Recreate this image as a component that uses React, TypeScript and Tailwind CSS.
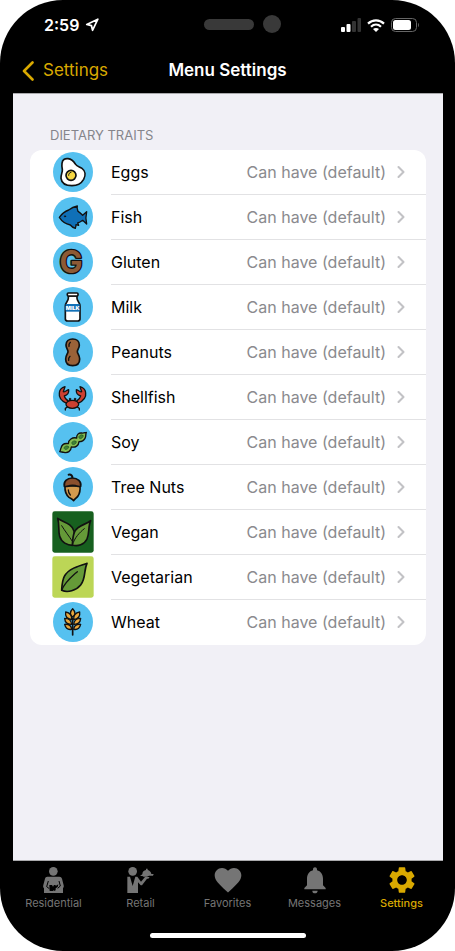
import type { ReactNode } from "react";
import { clsx } from "clsx";
import { ChevronRight, Navigation } from "lucide-react";
import { MdFavorite, MdNotifications, MdSettings } from "react-icons/md";

const INK = "#111111";

function Badge({ square, children }: { square?: string; children: ReactNode }) {
  return (
    <svg
      viewBox="0 0 126 126"
      className="mt-px size-[42px] shrink-0 self-start"
      fill="none"
      stroke={INK}
      strokeWidth="5"
      strokeLinecap="round"
      strokeLinejoin="round"
      aria-hidden="true"
    >
      {square ? (
        <rect x="1" y="1" width="124" height="124" rx="7" fill={square} stroke="none" />
      ) : (
        <circle cx="63" cy="63" r="60" fill="#56c1f0" stroke="none" />
      )}
      {children}
    </svg>
  );
}

function EggIcon() {
  return (
    <Badge>
      <path fill="#fff" d="M30 37C31 26 38 22 48 23C60 24 66 32 70 39C74 47 83 47 90 52C101 60 101 74 95 85C88 97 75 104 60 104C42 104 29 97 27 82C26 72 32 64 31 55C30 48 29 44 30 37Z" />
      <circle cx="57" cy="73" r="15" fill="#f6d743" />
      <path strokeWidth="3" d="M50 73C50 68 52 65 57 64" />
    </Badge>
  );
}

function FishIcon() {
  return (
    <Badge>
      <path fill="#0f70b7" strokeWidth="4" d="M22 64C29 54 39 46 50 42C58 36 67 32 76 30C74 36 76 40 78 46C84 49 88 54 92 58L104 47C101 60 101 73 104 84L92 73C87 77 82 80 77 81L80 88L72 86C72 90 71 93 70 97C64 95 58 91 55 87C41 84 29 75 22 64Z" />
      <circle cx="39" cy="61" r="2" fill={INK} strokeWidth="2" />
    </Badge>
  );
}

function GlutenIcon() {
  return (
    <Badge>
      <text
        x="57"
        y="97"
        textAnchor="middle"
        fontFamily="Inter, sans-serif"
        fontSize="92"
        fontWeight="700"
        fill="#8d5a35"
        strokeWidth="8"
        paintOrder="stroke"
      >
        G
      </text>
    </Badge>
  );
}

function MilkIcon() {
  return (
    <Badge>
      <path fill="#fff" d="M49 30V37C49 46 40 49 40 60V99C40 103 43 105 47 105H77C81 105 84 103 84 99V60C84 49 75 46 75 37V30Z" />
      <rect x="46" y="21" width="32" height="9" rx="3" fill="#fff" />
      <rect x="41" y="54" width="42" height="23" fill="#1271b8" stroke="none" />
      <text
        x="62"
        y="71"
        textAnchor="middle"
        fontFamily="Inter, sans-serif"
        fontSize="16"
        fontWeight="900"
        fill="#fff"
        stroke="none"
      >
        MILK
      </text>
    </Badge>
  );
}

function PeanutIcon() {
  return (
    <Badge>
      <path fill="#9a6238" d="M62 24C74 24 82 31 82 42C82 52 76 56 76 62C76 68 83 73 83 84C83 97 75 104 62 104C49 104 41 97 41 84C41 73 48 68 48 62C48 56 42 52 42 42C42 31 50 24 62 24Z" />
      <path strokeWidth="4" d="M51 46C50 41 52 37 55 34M50 88C49 82 51 79 54 76" />
    </Badge>
  );
}

function CrabIcon() {
  return (
    <Badge>
      <path d="M46 93L40 97V102M76 93L82 97V102M54 76V70M69 76V70" strokeWidth="4" />
      <g fill="#cc4031" strokeWidth="4">
        <path d="M44 82C30 76 20 64 22 50C23 41 28 35 39 32L34 47C36 50 42 44 50 41C51 51 45 58 37 60C38 66 44 72 50 76Z" />
        <path d="M78 82C92 76 103 64 101 50C100 41 95 35 84 32L89 47C87 50 81 44 73 41C72 51 78 58 86 60C85 66 79 72 73 76Z" />
        <ellipse cx="61" cy="85" rx="19" ry="12" />
      </g>
      <circle cx="54" cy="69" r="3" fill={INK} strokeWidth="1" />
      <circle cx="69" cy="69" r="3" fill={INK} strokeWidth="1" />
    </Badge>
  );
}

function SoyIcon() {
  return (
    <Badge>
      <path fill="#84bd52" strokeWidth="4" d="M23 92C26 89 25 85 27 81C30 70 39 66 49 68C49 56 61 48 74 51C73 41 80 35 89 36C95 37 98 35 103 34C100 40 103 46 99 52C95 60 88 62 81 62C80 74 71 80 58 78C57 91 47 97 36 94C31 93 28 93 23 92Z" />
      <g fill="#3f8435" stroke="#2c5e28" strokeWidth="2">
        <ellipse cx="43" cy="80" rx="7" ry="5" transform="rotate(-20 43 80)" />
        <ellipse cx="66" cy="65" rx="7" ry="5" transform="rotate(-25 66 65)" />
        <ellipse cx="87" cy="47" rx="7" ry="5" transform="rotate(-35 87 47)" />
      </g>
    </Badge>
  );
}

function AcornIcon() {
  return (
    <Badge>
      <path d="M61 37C62 30 58 25 50 26" strokeWidth="6" />
      <path fill="#d39a4e" d="M39 60C38 75 42 86 51 94C56 98 61 99 65 104C68 99 74 96 78 90C84 81 85 71 84 60Z" />
      <path fill="#8a4f2d" d="M37 61C34 47 45 36 61 36C77 36 89 47 86 61C79 63 75 60 70 59C64 58 60 58 54 59C48 60 44 63 37 61Z" />
      <path strokeWidth="4" d="M49 72C49 79 52 84 55 87" />
    </Badge>
  );
}

function VeganIcon() {
  return (
    <Badge square="#17601f">
      <path fill="#659a38" d="M17 22C34 34 58 36 66 60C70 74 68 91 62 103C46 103 28 94 23 76C18 58 23 42 17 22Z" />
      <path fill="#659a38" d="M116 29C104 41 76 41 67 64C62 77 62 90 61 102C77 107 97 101 105 84C113 66 108 46 116 29Z" />
      <path strokeWidth="3" d="M29 44C40 62 51 75 61 91M97 53C82 65 68 80 61 102" />
    </Badge>
  );
}

function VegetarianIcon() {
  return (
    <Badge square="#bcd656">
      <path fill="#659a38" d="M105 22C82 29 49 38 37 61C30 75 30 88 29 103C47 111 72 104 86 87C102 68 95 43 105 22Z" />
      <path strokeWidth="4" d="M29 103C38 79 57 64 76 47" />
    </Badge>
  );
}

function WheatIcon() {
  return (
    <Badge>
      <path d="M62 52V102" />
      <g fill="#eaa83e" strokeWidth="4">
        <path d="M62 23C53 32 53 42 62 48C71 42 71 32 62 23Z" />
        <path d="M41 33C39 46 46 54 59 56C60 44 53 35 41 33Z" />
        <path d="M83 33C85 46 78 54 65 56C64 44 71 35 83 33Z" />
        <path d="M38 52C39 65 47 71 59 70C58 59 50 52 38 52Z" />
        <path d="M86 52C85 65 77 71 65 70C66 59 74 52 86 52Z" />
        <path d="M38 70C41 82 49 87 59 85C58 75 50 69 38 70Z" />
        <path d="M86 70C83 82 75 87 65 85C66 75 74 69 86 70Z" />
      </g>
    </Badge>
  );
}

function ResidentialIcon() {
  return (
    <svg viewBox="-6 -6 96 96" className="size-8" fill="currentColor" aria-hidden="true">
      <circle cx="40" cy="16" r="13" />
      <path d="M22 32H58C62 32 65 34 66 38L71 58C72 62 71 64 69 67V81H12V67C9 64 9 61 10 57L15 38C16 34 18 32 22 32Z" />
      <path fill="none" stroke="#000" strokeWidth="3" d="M25 45L20 62L28 68M57 45L61 60L53 67" />
      <path fill="#000" d="M28 57H37V61H41V57H47V60L55 55L53 63L47 67V73L42 75L39 72V75H29Z" />
    </svg>
  );
}

function RetailIcon() {
  return (
    <svg viewBox="-6 -6 96 96" className="size-8" fill="currentColor" aria-hidden="true">
      <circle cx="17" cy="16" r="13" />
      <path d="M1 32H9L17 60L25 32H31L42 47L54 33H68L64 38H60L45 58H41L33 49V81H1Z" />
      <path d="M39 30L46 25C46 17 51 13 57 12V8H62V12C68 14 72 18 73 24H80L78 29H66L60 32H50L46 30Z" />
    </svg>
  );
}

function SignalIcon() {
  return (
    <svg viewBox="0 0 20 14" className="h-[14px] w-5" fill="#fff" aria-hidden="true">
      <rect x="0" y="9" width="4" height="5" rx="1" />
      <rect x="5.500" y="6" width="4" height="8" rx="1" />
      <rect x="11" y="3" width="4" height="11" rx="1" fill="#333" />
      <rect x="16.500" y="0" width="3.500" height="14" rx="1" fill="#333" />
    </svg>
  );
}

function WifiIcon() {
  return (
    <svg viewBox="0 0 18 13" className="h-[13px] w-[18px]" fill="none" stroke="#fff" strokeWidth="2.200" aria-hidden="true">
      <path d="M1 4.600C5.500 0.200 12.500 0.200 17 4.600" />
      <path d="M4 7.800C7 5 11 5 14 7.800" />
      <path d="M9 13L6 10C7.700 8.500 10.300 8.500 12 10Z" fill="#fff" stroke="none" />
    </svg>
  );
}

function BatteryIcon() {
  return (
    <svg viewBox="0 0 28 14" className="h-[14px] w-7" fill="none" aria-hidden="true">
      <rect x="0.500" y="0.500" width="25" height="13" rx="4" stroke="#666" />
      <rect x="2" y="2" width="18" height="10" rx="2.500" fill="#fff" />
      <path d="M27 5V9C28.200 8.500 28.200 5.500 27 5Z" fill="#666" />
    </svg>
  );
}

function BackIcon() {
  return (
    <svg
      viewBox="0 0 12 20"
      className="h-5 w-3"
      fill="none"
      stroke="currentColor"
      strokeWidth="2.600"
      strokeLinecap="round"
      strokeLinejoin="round"
      aria-hidden="true"
    >
      <path d="M10.500 1.500L2 10L10.500 18.500" />
    </svg>
  );
}

const traits = [
  { name: "Eggs", icon: EggIcon },
  { name: "Fish", icon: FishIcon },
  { name: "Gluten", icon: GlutenIcon },
  { name: "Milk", icon: MilkIcon },
  { name: "Peanuts", icon: PeanutIcon },
  { name: "Shellfish", icon: CrabIcon },
  { name: "Soy", icon: SoyIcon },
  { name: "Tree Nuts", icon: AcornIcon },
  { name: "Vegan", icon: VeganIcon },
  { name: "Vegetarian", icon: VegetarianIcon },
  { name: "Wheat", icon: WheatIcon },
];

const tabs = [
  { label: "Residential", icon: ResidentialIcon },
  { label: "Retail", icon: RetailIcon },
  { label: "Favorites", icon: MdFavorite },
  { label: "Messages", icon: MdNotifications },
  { label: "Settings", icon: MdSettings },
];

function StatusBar() {
  return (
    <div className="grid h-12 grid-cols-[1fr_auto_1fr] items-center pr-9 pl-11 text-white">
      <div className="flex items-center gap-[6px] pt-[2px]">
        <span className="text-base font-semibold">2:59</span>
        <Navigation className="size-[14px]" strokeWidth={3} />
      </div>
      <div className="flex items-center gap-[9px] pl-[22px]">
        <span className="h-[11px] w-[50px] rounded-full bg-[#393939]" />
        <span className="size-[18px] rounded-full bg-[#393939]" />
      </div>
      <div className="flex items-center justify-end gap-[6px] pt-[2px]">
        <SignalIcon />
        <WifiIcon />
        <BatteryIcon />
      </div>
    </div>
  );
}

function NavBar() {
  return (
    <header className="grid h-[45px] grid-cols-[1fr_auto_1fr] items-center px-[22px] pt-px">
      <button className="flex items-center gap-[9px] text-[17px] text-[#d9a900]">
        <BackIcon />
        Settings
      </button>
      <h1 className="text-[17px] font-semibold text-white">Menu Settings</h1>
    </header>
  );
}

function TraitList() {
  return (
    <section>
      <h2 className="pl-5 text-[13px] leading-5 text-[#85858b]">DIETARY TRAITS</h2>
      <ul className="mt-[5px] overflow-hidden rounded-xl bg-white">
        {traits.map((trait, i) => (
          <li key={trait.name}>
            <button className="flex h-[45px] w-full items-center gap-[17px] pl-[22px] text-left text-base">
              <trait.icon />
              <span
                className={clsx(
                  "flex h-full flex-1 items-center border-b pr-[15px]",
                  i < traits.length - 1 ? "border-[#e2e2e4]" : "border-transparent"
                )}
              >
                <span className="flex-1 text-black">{trait.name}</span>
                <span className="text-[#8a8a8e]">Can have (default)</span>
                <ChevronRight className="ml-[5px] size-5 text-[#c2c2c5]" strokeWidth={2.5} />
              </span>
            </button>
          </li>
        ))}
      </ul>
    </section>
  );
}

function TabBar({ active }: { active: string }) {
  return (
    <nav className="grid grid-cols-5 px-[10px] pt-[3px]">
      {tabs.map((tab) => (
        <button
          key={tab.label}
          className={clsx(
            "flex flex-col items-center text-[11px] leading-[14px]",
            tab.label === active ? "font-medium text-[#d9a900]" : "text-[#757575]"
          )}
        >
          <tab.icon className="size-8" />
          {tab.label}
        </button>
      ))}
    </nav>
  );
}

export default function App() {
  return (
    <div className="min-h-screen bg-white font-['Inter',sans-serif]">
      <div className="flex min-h-screen flex-col rounded-[63px] bg-black">
        <StatusBar />
        <NavBar />
        <main className="mr-3 ml-[13px] flex-1 border-y border-[#a9a9ac] bg-[#f1f0f6] px-[17px] pt-[31px]">
          <TraitList />
        </main>
        <TabBar active="Settings" />
        <div className="flex justify-center pt-[23px] pb-[13px]">
          <span className="h-[5px] w-[156px] rounded-full bg-white" />
        </div>
      </div>
    </div>
  );
}
